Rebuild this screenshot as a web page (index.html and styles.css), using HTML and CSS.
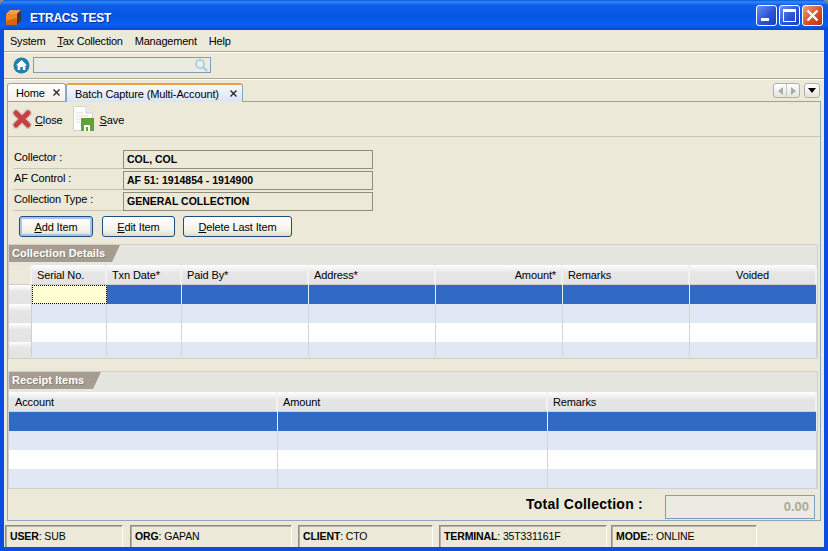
FILE: index.html
```html
<!DOCTYPE html>
<html lang="en">
<head>
<meta charset="utf-8">
<title>ETRACS TEST</title>
<link rel="stylesheet" href="styles.css">
</head>
<body>
<div class="window">
  <header class="titlebar">
    <svg class="app-icon" width="16" height="16" viewBox="0 0 16 16"><path d="M0 5 L4 1 H15 L11 5Z" fill="#e8a05a"/><path d="M0 5H11V16H0Z" fill="#d9640f"/><path d="M0 5H11V9L0 12Z" fill="#f08a1e"/><path d="M11 5L15 1V12L11 16Z" fill="#3c3a38"/></svg>
    <span class="title-text">ETRACS TEST</span>
    <div class="win-btns">
      <div class="win-btn"><span class="min-glyph"></span></div>
      <div class="win-btn"><span class="max-glyph"></span></div>
      <div class="win-btn close"><svg width="13" height="13" viewBox="0 0 13 13"><path d="M1.5 1.5L11.5 11.5M11.5 1.5L1.5 11.5" stroke="#fff" stroke-width="2.4"/></svg></div>
    </div>
  </header>
  <div class="client">
    <nav class="menubar">
      <span>System</span><span><u>T</u>ax Collection</span><span>Management</span><span>Help</span>
    </nav>
    <div class="searchbar">
      <svg width="17" height="17" viewBox="0 0 17 17"><circle cx="8.5" cy="8.5" r="8" fill="#1e7fb0"/><path d="M8.5 3L3 8.3H4.6V13H7.2V10H9.8V13H12.4V8.3H14Z" fill="#fff"/></svg>
      <div class="searchbox"><svg width="14" height="14" viewBox="0 0 14 14"><circle cx="6" cy="6" r="4" fill="#e6f0f2" stroke="#a5cbd8" stroke-width="1.6"/><path d="M9 9L13 13" stroke="#a5cbd8" stroke-width="2.2"/></svg></div>
    </div>
    <div class="tabbar">
      <div class="tab"><span>Home</span><svg class="tab-x" width="7" height="7" viewBox="0 0 7 7"><path d="M.5 .5L6.5 6.5M6.5 .5L.5 6.5" stroke="#222" stroke-width="1.3"/></svg></div>
      <div class="tab active"><span>Batch Capture (Multi-Account)</span><svg class="tab-x" width="7" height="7" viewBox="0 0 7 7"><path d="M.5 .5L6.5 6.5M6.5 .5L.5 6.5" stroke="#222" stroke-width="1.3"/></svg></div>
      <div class="tab-ctrl">
        <div class="arrows"><span class="arr left"></span><span class="arr right"></span></div>
        <div class="drop"><span class="drop-tri"></span></div>
      </div>
    </div>
    <main class="panel">
      <div class="toolbar">
        <div class="tool close-tool">
          <svg width="20" height="20" viewBox="0 0 20 20"><path d="M4 4L16 16M16 4L4 16" stroke="#cfcac4" stroke-width="7.5" stroke-linecap="round"/><path d="M4 4L16 16M16 4L4 16" stroke="#c8403f" stroke-width="5" stroke-linecap="round"/></svg>
          <span><u>C</u>lose</span>
        </div>
        <div class="tool save-tool">
          <svg width="24" height="26" viewBox="0 0 24 26"><path d="M1.5 .5H14L20.5 7V24.5H1.5Z" fill="#fff" stroke="#d5d3cb"/><path d="M14 .5V7H20.5" fill="#eee" stroke="#d5d3cb"/><path d="M4 7H11M4 10H16M4 13H8M4 16H8" stroke="#dddbd4"/><rect x="9" y="12" width="13" height="13" fill="#62a03c"/><rect x="12" y="19" width="6" height="6" fill="#fff"/><rect x="14" y="21" width="2" height="4" fill="#62a03c"/></svg>
          <span><u>S</u>ave</span>
        </div>
      </div>
      <section class="form">
        <div class="field"><label>Collector :</label><div class="value">COL, COL</div></div>
        <div class="field"><label>AF Control :</label><div class="value">AF 51: 1914854 - 1914900</div></div>
        <div class="field"><label>Collection Type :</label><div class="value">GENERAL COLLECTION</div></div>
        <div class="actions">
          <button class="btn focus w-add"><u>A</u>dd Item</button>
          <button class="btn w-edit"><u>E</u>dit Item</button>
          <button class="btn w-del"><u>D</u>elete Last Item</button>
        </div>
      </section>
      <section class="group details">
        <h2 class="group-tab tab-details">Collection Details</h2>
        <div class="grid grid-details">
          <div class="hd corner"></div><div class="hd">Serial No.</div><div class="hd">Txn Date*</div><div class="hd">Paid By*</div><div class="hd">Address*</div><div class="hd right">Amount*</div><div class="hd">Remarks</div><div class="hd center">Voided</div>
          <div class="rh"></div><div class="c editing"></div><div class="c sel"></div><div class="c sel"></div><div class="c sel"></div><div class="c sel"></div><div class="c sel"></div><div class="c sel"></div>
          <div class="rh"></div><div class="c alt"></div><div class="c alt"></div><div class="c alt"></div><div class="c alt"></div><div class="c alt"></div><div class="c alt"></div><div class="c alt"></div>
          <div class="rh"></div><div class="c"></div><div class="c"></div><div class="c"></div><div class="c"></div><div class="c"></div><div class="c"></div><div class="c"></div>
          <div class="rh"></div><div class="c alt"></div><div class="c alt"></div><div class="c alt"></div><div class="c alt"></div><div class="c alt"></div><div class="c alt"></div><div class="c alt"></div>
        </div>
      </section>
      <section class="group items">
        <h2 class="group-tab tab-items">Receipt Items</h2>
        <div class="grid grid-items">
          <div class="hd">Account</div><div class="hd">Amount</div><div class="hd">Remarks</div>
          <div class="c sel"></div><div class="c sel"></div><div class="c sel"></div>
          <div class="c alt"></div><div class="c alt"></div><div class="c alt"></div>
          <div class="c"></div><div class="c"></div><div class="c"></div>
          <div class="c alt"></div><div class="c alt"></div><div class="c alt"></div>
        </div>
      </section>
      <div class="total">
        <span class="total-label">Total Collection :</span>
        <div class="total-box">0.00</div>
      </div>
    </main>
    <footer class="status">
      <div class="cell c-user"><b>USER</b>: SUB</div>
      <div class="cell c-org"><b>ORG</b>: GAPAN</div>
      <div class="cell c-client"><b>CLIENT</b>: CTO</div>
      <div class="cell c-term"><b>TERMINAL</b>: 35T331161F</div>
      <div class="cell c-mode"><b>MODE:</b>: ONLINE</div>
    </footer>
  </div>
</div>
</body>
</html>
```
FILE: styles.css
```css
* { box-sizing: border-box; }
html, body { margin: 0; padding: 0; width: 828px; height: 551px; overflow: hidden; background: #8a8a8a; }
body { font: 11px "Liberation Sans", Arial, sans-serif; color: #000; letter-spacing: -0.12px; }
.window { width: 828px; height: 551px; display: flex; flex-direction: column; background: #0a4de0; border-radius: 7px 7px 0 0; overflow: hidden; }
.titlebar { height: 30px; flex: none; display: flex; align-items: center; padding: 1px 5px 0 6px; background: linear-gradient(#0a56dc 0, #2f8bf7 2px, #0f5ee8 5px, #0556e4 16px, #0a60f0 25px, #0448d0 30px); }
.app-icon { flex: none; margin-top: 2px; }
.title-text { margin-left: 8px; margin-top: 5px; color: #fff; font-weight: bold; font-size: 12px; letter-spacing: -0.2px; text-shadow: 1px 1px 0 #0b2f90; }
.win-btns { margin-left: auto; display: flex; gap: 2px; }
.win-btn { width: 21px; height: 21px; border: 1px solid #fff; border-radius: 3px; background: linear-gradient(135deg, #6c8ff0, #2a55d8 55%, #1c3fc0); display: flex; align-items: center; justify-content: center; position: relative; }
.win-btn.close { background: linear-gradient(135deg, #f0a080, #d8502c 55%, #b83010); }
.min-glyph { width: 8px; height: 3px; background: #fff; position: absolute; left: 4px; bottom: 4px; }
.max-glyph { width: 13px; height: 13px; border: 1px solid #fff; border-top-width: 3px; }
.client { width: 820px; height: 517px; margin: 0 4px 4px; background: #ece9d8; display: flex; flex-direction: column; position: relative; }
.menubar { height: 22px; flex: none; display: flex; align-items: center; gap: 12px; padding: 1px 0 0 6px; border-bottom: 1px solid #aca899; box-shadow: 0 1px 0 #fff; letter-spacing: -0.22px; }
.searchbar { height: 27px; flex: none; display: flex; align-items: center; gap: 3px; padding: 0 0 0 9px; border-bottom: 1px solid #aca899; box-shadow: 0 1px 0 #fff; }
.searchbox { width: 178px; height: 16px; border: 1px solid #7f9db9; background: #ebebe3; display: flex; align-items: center; justify-content: flex-end; padding-right: 2px; }
.tabbar { height: 22px; flex: none; display: flex; align-items: flex-end; padding: 0 0 0 3px; position: relative; z-index: 1; }
.tab { height: 18px; width: 59px; display: flex; align-items: center; padding: 0 5px 0 8px; border: 1px solid #8ca6bc; border-bottom: 0; border-radius: 3px 3px 0 0; background: linear-gradient(#fff, #f2f0e6); }
.tab span { flex: 1; white-space: nowrap; }
.tab-x { flex: none; }
.tab.active { width: 177px; height: 19px; margin-bottom: -1px; border-top: 2px solid #e9a33c; background: linear-gradient(#f7f9fd, #d9e4f6); padding-left: 8px; }
.tab-ctrl { margin-left: auto; display: flex; gap: 4px; align-self: flex-start; margin-top: 4px; margin-right: 4px; }
.arrows { width: 27px; height: 15px; border: 1px solid #a8b0b8; border-radius: 3px; background: linear-gradient(#fff, #e4e4dc); display: flex; }
.arr { flex: 1; display: flex; align-items: center; justify-content: center; }
.arr.left { border-right: 1px solid #c8c8c0; }
.arr::before { content: ""; border: 4px solid transparent; }
.arr.left::before { border-right: 5px solid #aaa; border-left: 0; }
.arr.right::before { border-left: 5px solid #aaa; border-right: 0; }
.drop { width: 16px; height: 15px; border: 1px solid #a8b0b8; border-radius: 3px; background: linear-gradient(#fff, #e4e4dc); display: flex; align-items: center; justify-content: center; }
.drop-tri { border: 4px solid transparent; border-top: 5px solid #000; border-bottom: 0; }
.panel { width: 814px; height: 420px; flex: none; margin-left: 3px; border: 1px solid #8ca6bc; display: flex; flex-direction: column; padding: 0 2px 0 0; }
.toolbar { height: 35px; flex: none; display: flex; align-items: center; padding-left: 4px; margin-right: -2px; border-bottom: 1px solid #c9c6b6; gap: 9px; }
.tool { display: flex; align-items: center; gap: 3px; }
.save-tool { gap: 4px; }
.tool span { margin-top: 2px; }
.form { height: 107px; flex: none; padding: 13px 0 0 5px; display: flex; flex-direction: column; }
.field { width: 360px; height: 21px; display: flex; flex: none; }
.field label { width: 110px; height: 19px; padding: 1px 0 0 1px; flex: none; border-bottom: 1px solid #c9c6b6; }
.value { width: 250px; height: 19px; border: 1px solid #8f8d80; font-weight: bold; padding: 2px 0 0 3px; font-size: 10.5px; letter-spacing: 0; }
.actions { display: flex; gap: 9px; padding: 3px 0 0 6px; }
.btn { height: 21px; padding: 0; font: inherit; letter-spacing: inherit; color: #000; border: 1px solid #1c4f7e; border-radius: 3px; background: linear-gradient(#fff, #f4f2e8 70%, #e0ddcc); }
.btn.focus { box-shadow: inset 0 0 0 2px #a8c4ee; }
.w-add { width: 74px; }
.w-edit { width: 73px; }
.w-del { width: 109px; margin-left: -1px; }
.group { background: #e6e6e0; border: 1px solid #cfcfcf; display: flex; flex-direction: column; flex: none; }
.group-tab { margin: 0; height: 17px; color: #fff; font-size: 11px; font-weight: bold; line-height: 16px; padding-left: 3px; background: #a69c90; text-shadow: 1px 1px 0 #8a8074; letter-spacing: 0.05px; }
.tab-details { width: 111px; clip-path: polygon(0 0, 100% 0, 103px 100%, 0 100%); }
.tab-items { width: 92px; clip-path: polygon(0 0, 100% 0, 84px 100%, 0 100%); }
.details { height: 115px; }
.items { height: 118px; margin-top: 12px; }
.grid { display: grid; margin-top: 3px; }
.grid-details { grid-template-columns: 23px 75px 75px 127px 127px 127px 127px 127px; grid-template-rows: 20px 19px 19px 19px 15px; }
.grid-items { grid-template-columns: 269px 270px 1fr; grid-template-rows: 20px 19px 19px 19px 19px; }
.hd { background: linear-gradient(#fff, #e6e6e6 40%, #e3e3e3); border-right: 2px solid #f2f2f2; border-bottom: 1px solid #cfcfcf; padding: 4px 0 0 5px; white-space: nowrap; }
.grid-items .hd:first-child { padding-left: 6px; }
.hd.corner { background: #ece9d8; }
.hd.right { text-align: right; padding-right: 5px; }
.hd.center { text-align: center; padding-left: 0; }
.rh { background: linear-gradient(#fff, #e6e6e6 35%, #e3e3e3); border-right: 1px solid #d0d0d0; }
.c { background: #fff; border-right: 1px solid #d4d4d4; }
.c.alt { background: #e1e8f5; }
.c.sel { background: #316ac5; border-right-color: #e8eef8; }
.c.editing { background: #ffffd2; outline: 1px dotted #000; outline-offset: -1px; }
.total { flex: 1; display: flex; align-items: flex-start; justify-content: flex-end; padding: 6px 3px 0 0; }
.total-label { font-size: 14px; font-weight: bold; letter-spacing: .25px; margin-right: 22px; margin-top: 1px; }
.total-box { width: 150px; height: 24px; border: 1px solid #7f9db9; background: #ebebe3; color: #aca899; font-size: 13px; font-weight: bold; letter-spacing: 0; text-align: right; line-height: 22px; padding-right: 5px; }
.status { height: 22px; flex: none; margin-top: 4px; display: flex; padding-left: 1px; }
.cell { height: 22px; border-style: solid; border-color: #8d8b7e #fff #ece9d8 #8d8b7e; border-width: 1px 1px 0 1px; box-shadow: inset 1px 1px 0 #b5b2a4; padding: 4px 0 0 4px; white-space: nowrap; font-size: 10.5px; }
.c-user { width: 118px; margin-right: 7px; }
.c-org { width: 162px; margin-right: 6px; }
.c-client { width: 135px; margin-right: 6px; }
.c-term { width: 168px; margin-right: 4px; }
.c-mode { width: 146px; }
```
